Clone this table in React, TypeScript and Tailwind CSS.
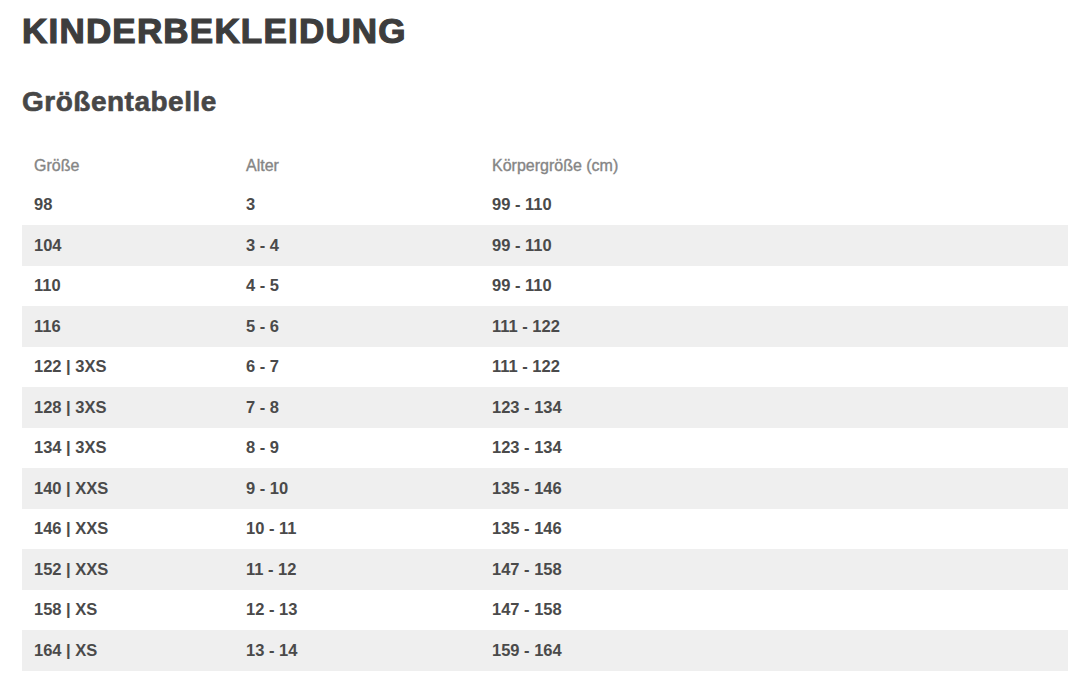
import React from "react";

type Row = { size: string; age: string; height: string };

const rows: Row[] = [
  { size: "98", age: "3", height: "99 - 110" },
  { size: "104", age: "3 - 4", height: "99 - 110" },
  { size: "110", age: "4 - 5", height: "99 - 110" },
  { size: "116", age: "5 - 6", height: "111 - 122" },
  { size: "122 | 3XS", age: "6 - 7", height: "111 - 122" },
  { size: "128 | 3XS", age: "7 - 8", height: "123 - 134" },
  { size: "134 | 3XS", age: "8 - 9", height: "123 - 134" },
  { size: "140 | XXS", age: "9 - 10", height: "135 - 146" },
  { size: "146 | XXS", age: "10 - 11", height: "135 - 146" },
  { size: "152 | XXS", age: "11 - 12", height: "147 - 158" },
  { size: "158 | XS", age: "12 - 13", height: "147 - 158" },
  { size: "164 | XS", age: "13 - 14", height: "159 - 164" },
];

export default function App() {
  return (
    <div className="min-h-screen bg-white pl-[22px] pr-[12px] pt-[13px] font-['Liberation_Sans',Arial,sans-serif]">
      <h1 className="text-[35px] leading-[36px] font-bold tracking-[1.2px] text-[#3d3d3d] [-webkit-text-stroke:1.2px_#3d3d3d]">
        KINDERBEKLEIDUNG
      </h1>
      <h2 className="mt-[39px] text-[28px] leading-[28px] font-bold tracking-[0.5px] text-[#474747] [-webkit-text-stroke:0.6px_#474747]">
        Größentabelle
      </h2>

      {/* size table */}
      <div className="mt-[28px] text-[16.5px]">
        <div className="grid h-[40.5px] grid-cols-[212px_246px_1fr] items-center px-[12px] pt-[3px] text-[16px] text-[#858585] [-webkit-text-stroke:0.35px_#858585]">
          <span>Größe</span>
          <span>Alter</span>
          <span>Körpergröße (cm)</span>
        </div>
        {rows.map((r, i) => (
          <div
            key={r.size}
            className={`grid h-[40.5px] grid-cols-[212px_246px_1fr] items-center px-[12px] font-bold text-[#4a4a4a] ${
              i % 2 === 1 ? "bg-[#efefef]" : "bg-white"
            }`}
          >
            <span>{r.size}</span>
            <span>{r.age}</span>
            <span>{r.height}</span>
          </div>
        ))}
      </div>
    </div>
  );
}
